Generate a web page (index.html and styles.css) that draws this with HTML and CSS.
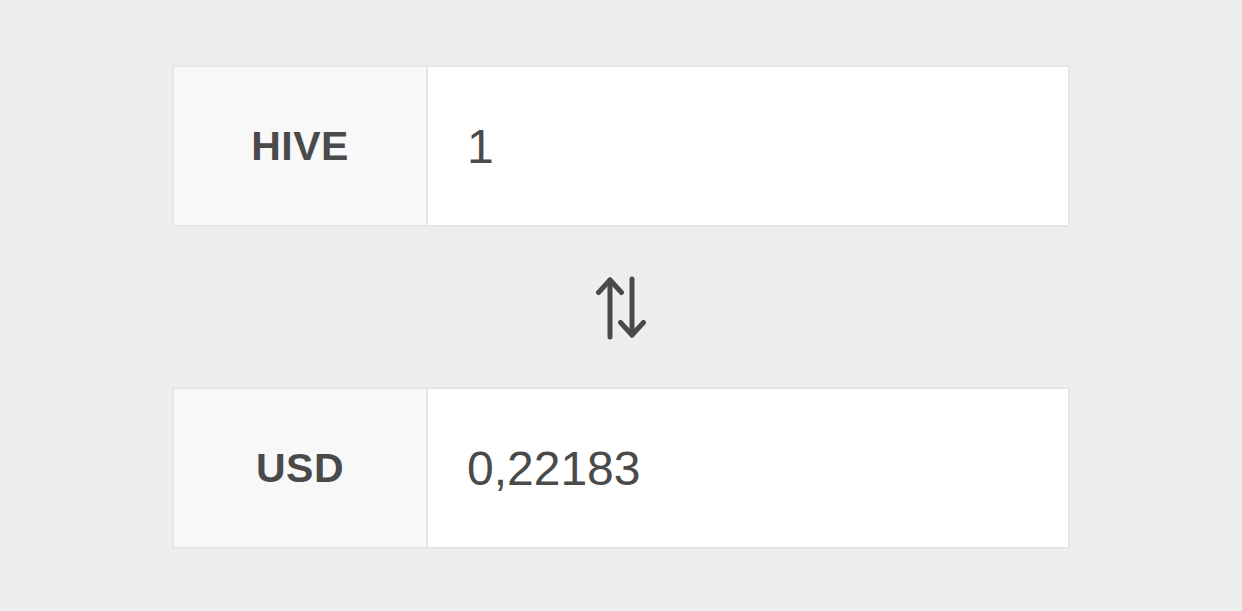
FILE: index.html
```html
<!DOCTYPE html>
<html lang="en">
<head>
<meta charset="utf-8">
<title>HIVE converter</title>
<link rel="stylesheet" href="styles.css">
</head>
<body>
<main class="converter">
  <div class="field">
    <div class="label">HIVE</div>
    <input class="value" type="text" value="1">
  </div>
  <div class="swap">
    <svg class="swap-icon" width="52" height="64" viewBox="0 0 52 64" aria-hidden="true">
      <g fill="none" stroke="#4a4a4a" stroke-width="5" stroke-linecap="round" stroke-linejoin="round">
        <line x1="15" y1="4" x2="15" y2="61"/>
        <polyline points="3.5,16.5 15,4 26.5,16.5"/>
        <line x1="37" y1="3" x2="37" y2="59"/>
        <polyline points="25.5,46.5 37,59 48.5,46.5"/>
      </g>
    </svg>
  </div>
  <div class="field">
    <div class="label">USD</div>
    <input class="value" type="text" value="0,22183">
  </div>
</main>
</body>
</html>
```
FILE: styles.css
```css
html, body {
  margin: 0;
  padding: 0;
  background: #eeeeee;
}
body {
  font-family: "Liberation Sans", Arial, sans-serif;
  color: #4a4a4a;
}
.converter {
  width: 898px;
  margin: 0 auto;
  padding-top: 65px;
  display: flex;
  flex-direction: column;
}
.field {
  display: flex;
  height: 162px;
  box-sizing: border-box;
  border: 2px solid #e6e6e6;
  background: #ffffff;
}
.label {
  width: 254px;
  flex: none;
  box-sizing: border-box;
  border-right: 2px solid #e6e6e6;
  background: #f8f8f8;
  display: flex;
  align-items: center;
  justify-content: center;
  font-weight: bold;
  font-size: 41px;
  letter-spacing: 0.5px;
}
.value {
  flex: 1;
  min-width: 0;
  border: 0;
  outline: none;
  background: #ffffff;
  padding: 0 0 0 39px;
  margin: 0;
  font-family: "Liberation Sans", Arial, sans-serif;
  font-size: 48px;
  color: #4a4a4a;
}
.swap {
  height: 160px;
  display: flex;
  align-items: center;
  justify-content: center;
}
.swap-icon {
  display: block;
  margin-top: 2px;
}
```
